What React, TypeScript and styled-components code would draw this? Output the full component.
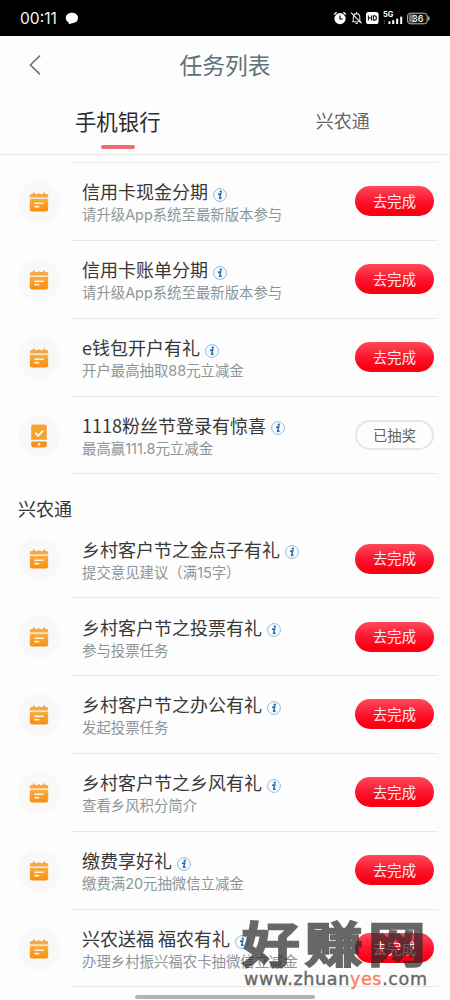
import React from "react";
import styled, { createGlobalStyle } from "styled-components";

type Task = {
  title: string;
  desc: string;
  icon?: "calendar" | "phone";
  done?: boolean;
};

const bankTasks: Task[] = [
  { title: "信用卡现金分期", desc: "请升级App系统至最新版本参与" },
  { title: "信用卡账单分期", desc: "请升级App系统至最新版本参与" },
  { title: "e钱包开户有礼", desc: "开户最高抽取88元立减金" },
  {
    title: "1118粉丝节登录有惊喜",
    desc: "最高赢111.8元立减金",
    icon: "phone",
    done: true,
  },
];

const farmTasks: Task[] = [
  { title: "乡村客户节之金点子有礼", desc: "提交意见建议（满15字）" },
  { title: "乡村客户节之投票有礼", desc: "参与投票任务" },
  { title: "乡村客户节之办公有礼", desc: "发起投票任务" },
  { title: "乡村客户节之乡风有礼", desc: "查看乡风积分简介" },
  { title: "缴费享好礼", desc: "缴费满20元抽微信立减金" },
  { title: "兴农送福 福农有礼", desc: "办理乡村振兴福农卡抽微信立减金" },
];

const CalendarIcon = () => (
  <svg width="20" height="22" viewBox="0 0 20 22">
    <defs>
      <linearGradient id="cal" x1="0" y1="0" x2="0" y2="1">
        <stop offset="0" stopColor="#f7ae48" />
        <stop offset="1" stopColor="#fb8c0c" />
      </linearGradient>
    </defs>
    <path
      d="M.8 6.6V4.8Q.8 3 2.6 3H3.6Q3.8 1.2 4.8 1.2T6 3H8.6Q9 2.2 10 2.2T11.4 3H14Q14.2 1.2 15.2 1.2T16.4 3H17.4Q19.2 3 19.2 4.8V6.6Z"
      fill="#f5a844"
    />
    <path d="M.8 7.8H19.2V18Q19.2 20.5 16.7 20.5H3.3Q.8 20.5 .8 18Z" fill="url(#cal)" />
    <path d="M5.4 12.2H14.6M5.4 15.6H10.2" stroke="#fff3de" strokeWidth="1.6" />
  </svg>
);

const PhoneIcon = () => (
  <svg width="18" height="24" viewBox="0 0 18 24">
    <path d="M1.2 15.8V3Q1.2.6 3.6.6H14.4Q16.8.6 16.8 3V15.8Z" fill="#f7a332" />
    <path d="M1.2 17.4H16.8V20.8Q16.8 23.4 14.2 23.4H3.8Q1.2 23.4 1.2 20.8Z" fill="#fa8d19" />
    <path d="M5.2 8.8L8.2 11.8L13 6.8" fill="none" stroke="#fff" strokeWidth="1.7" />
    <circle cx="9" cy="20.4" r="1.3" fill="#fff" />
  </svg>
);

const InfoIcon = () => (
  <svg width="14" height="14" viewBox="0 0 14 14">
    <circle cx="7" cy="7" r="6.4" fill="#fafdff" stroke="#7db2da" strokeWidth="0.9" />
    <circle cx="7.8" cy="3.6" r="1.2" fill="#1f6cb0" />
    <path
      d="M5 6.2L7.7 5.9L6.6 10.3Q6.8 10.7 8.6 9.8"
      fill="none"
      stroke="#1f6cb0"
      strokeWidth="1.5"
    />
  </svg>
);

const StatusIcons = () => (
  <svg width="100" height="16" viewBox="0 0 100 16">
    <circle cx="7" cy="8.6" r="5.6" fill="#fff" />
    <path d="M1.2 4.4L3.6 2.2M12.8 4.4L10.4 2.2" stroke="#fff" strokeWidth="1.4" />
    <path d="M7 5.4V9H9.8" fill="none" stroke="#000" strokeWidth="1.2" />
    <path
      d="M19 11.8H28M20.3 11.5V7.5Q20.3 3.8 23.5 3.6Q26.8 3.8 26.8 7.5V11.5M22.4 13.4H24.8M23.5 2V3.6"
      fill="none"
      stroke="#ddd"
      strokeWidth="1.1"
    />
    <path d="M18 2.6L28.6 13.4" stroke="#eee" strokeWidth="1.2" />
    <rect x="33" y="2" width="12.6" height="12" rx="2.6" fill="#fff" />
    <path
      d="M35.4 5.4V10.6M38.5 5.4V10.6M35.4 8H38.5M40.4 5.9V10.1H41.5Q43.4 10.1 43.4 8T41.5 5.9Z"
      fill="none"
      stroke="#111"
      strokeWidth="1.1"
    />
    <text x="50" y="7" fill="#fff" fontSize="7.4" fontWeight="700" fontFamily="Inter, sans-serif">
      5G
    </text>
    <g fill="#fff">
      <rect x="55.4" y="11.4" width="2" height="2.6" />
      <rect x="59.2" y="10.2" width="2" height="3.8" />
      <rect x="63.2" y="8.6" width="2" height="5.4" />
      <rect x="67.2" y="6.6" width="2" height="7.4" />
    </g>
    <rect x="50.8" y="10" width="1" height="4" fill="#444" />
    <rect x="74.6" y="3.2" width="19.6" height="10.6" rx="2.8" fill="#111" stroke="#bbb" />
    <rect x="76" y="4.6" width="6" height="7.8" rx="1.4" fill="#777" />
    <path d="M95.8 6.4V10.4" stroke="#ccc" strokeWidth="1.2" />
    <text x="79" y="11.7" fill="#fff" fontSize="9" fontWeight="500" fontFamily="Inter, sans-serif">
      36
    </text>
  </svg>
);

const TaskRow = ({ task }: { task: Task }) => (
  <Row>
    <IconHold>{task.icon === "phone" ? <PhoneIcon /> : <CalendarIcon />}</IconHold>
    <RowBody>
      <Info>
        <TitleLine>
          <Title>{task.title}</Title>
          <InfoIcon />
        </TitleLine>
        <Desc>{task.desc}</Desc>
      </Info>
      <Action $done={task.done}>{task.done ? "已抽奖" : "去完成"}</Action>
    </RowBody>
  </Row>
);

const App = () => {
  return (
    <Screen>
      <GlobalStyle />
      <StatusBar>
        <Clock>
          00:11
          <svg width="14" height="13" viewBox="0 0 14 13">
            <path
              d="M7 .8C10.6.8 13 3 13 6S10.6 11.2 7 11.2L3.8 12.2L3.6 10.4C1.6 9.4.8 7.8.8 6C.8 3 3.4.8 7 .8Z"
              fill="#fff"
            />
          </svg>
        </Clock>
        <StatusIcons />
      </StatusBar>
      <Header>
        <Back>
          <svg width="12" height="22" viewBox="0 0 12 22">
            <path d="M11 1.6L1.4 11L11 20.4" fill="none" stroke="#60757d" strokeWidth="1.5" />
          </svg>
        </Back>
        <HeaderTitle>任务列表</HeaderTitle>
      </Header>
      <Tabs>
        <Tab $active>手机银行</Tab>
        <Tab>兴农通</Tab>
      </Tabs>
      <Peek />
      {bankTasks.map((task) => (
        <TaskRow key={task.title} task={task} />
      ))}
      <Section>兴农通</Section>
      {farmTasks.map((task) => (
        <TaskRow key={task.title} task={task} />
      ))}
      <HomeBar />
      <Watermark>
        <MarkName>好赚网</MarkName>
        <MarkUrl>
          www.zhuan<span>yes</span>.com
        </MarkUrl>
      </Watermark>
    </Screen>
  );
};

export default App;

const GlobalStyle = createGlobalStyle`
  * {
    box-sizing: border-box;
  }

  body {
    margin: 0;
    background-color: #fdfdfd;
    font-family: "Noto Sans CJK SC", sans-serif;
  }
`;

const Screen = styled.div`
  position: relative;
  width: 450px;
  height: 1000px;
  overflow: hidden;
  background-color: #fdfdfd;
`;

const StatusBar = styled.div`
  display: flex;
  align-items: center;
  justify-content: space-between;
  height: 36px;
  padding: 0 17px 0 20px;
  background-color: #000;
`;

const Clock = styled.div`
  display: flex;
  align-items: center;
  gap: 8px;
  color: #f4f4f4;
  font-family: Inter, sans-serif;
  font-size: 15.6px;
`;

const Header = styled.div`
  display: grid;
  grid-template-columns: 60px 1fr 60px;
  align-items: center;
  height: 57px;
`;

const Back = styled.div`
  display: flex;
  padding-left: 29px;
`;

const HeaderTitle = styled.div`
  text-align: center;
  color: #5d717a;
  font-size: 22.8px;
  line-height: 29px;
`;

const Tabs = styled.div`
  display: grid;
  grid-template-columns: 1fr 1fr;
  height: 62px;
  padding: 0 0 5px 5px;
  border-bottom: 1px solid #e6e6e6;
`;

const Tab = styled.div<{ $active?: boolean }>`
  display: flex;
  flex-direction: column;
  align-items: center;
  padding: ${({ $active }) => ($active ? "0 0 0 3px" : "0 0 0 8px")};
  color: ${({ $active }) => ($active ? "#2c2c2c" : "#686868")};
  font-size: ${({ $active }) => ($active ? "21.4px" : "18px")};
  line-height: 55px;

  &::after {
    content: "";
    display: ${({ $active }) => ($active ? "block" : "none")};
    flex: none;
    width: 34px;
    height: 4px;
    margin-top: -3px;
    border-radius: 2px;
    background-color: #ee6a74;
  }
`;

const Peek = styled.div`
  height: 8px;
  margin: 0 12px 0 72px;
  border-bottom: 1px solid #ebebeb;
`;

const Row = styled.div`
  display: flex;
  height: 77.85px;
  padding: 0 12px 0 18px;
`;

const IconHold = styled.div`
  display: flex;
  align-items: center;
  justify-content: center;
  width: 42px;
  height: 42px;
  margin: 18px 12px 0 0;
  border-radius: 50%;
  background-color: #f8f8f8;
`;

const RowBody = styled.div`
  display: flex;
  flex: 1;
  align-items: center;
  justify-content: space-between;
  padding: 0 4px 0 10px;
  border-bottom: 1px solid #e8e8e8;
`;

const Info = styled.div`
  display: flex;
  flex-direction: column;
  padding-top: 4px;
  white-space: nowrap;
`;

const TitleLine = styled.div`
  display: flex;
  align-items: center;
  gap: 5px;
  height: 24px;

  svg {
    margin-top: 7px;
  }
`;

const Title = styled.div`
  color: #383838;
  font-size: 18px;
  line-height: 24px;
`;

const Desc = styled.div`
  color: #8c9699;
  font-family: Inter, "Noto Sans CJK SC", sans-serif;
  font-size: 14.4px;
  line-height: 24px;
`;

const Action = styled.div<{ $done?: boolean }>`
  display: flex;
  flex: none;
  align-items: center;
  justify-content: center;
  width: 79px;
  height: 30px;
  padding-bottom: ${({ $done }) => ($done ? "0" : "2px")};
  border: ${({ $done }) => ($done ? "2px solid #e6e6e6" : "none")};
  border-radius: 15px;
  background: ${({ $done }) =>
    $done ? "#fdfdfd" : "linear-gradient(#ff4a58, #fc1630 50%, #fb0012 85%)"};
  color: ${({ $done }) => ($done ? "#626262" : "#ffecec")};
  font-size: 14.3px;
`;

const Section = styled.div`
  height: 46px;
  padding: 11px 0 0 18px;
  color: #333;
  font-size: 18px;
  line-height: 46px;
`;

const HomeBar = styled.div`
  width: 180px;
  height: 4px;
  margin: 8px auto 0;
  border-radius: 2px;
  background-color: #b4b4b4;
`;

/* translucent site mark lying over the last row */
const Watermark = styled.div`
  position: absolute;
  left: 242px;
  top: 914px;
  width: 190px;
  color: #282828;
  opacity: 0.7;
  white-space: nowrap;
`;

const MarkName = styled.div`
  height: 57px;
  font-size: 48px;
  font-weight: 500;
  line-height: 55px;
  letter-spacing: 4.5px;
  transform: scaleX(1.2);
  transform-origin: left;
  stroke-linejoin: round;
  -webkit-text-stroke: 2.6px #282828;
`;

const MarkUrl = styled.div`
  margin-left: 2px;
  font-family: "DejaVu Sans", sans-serif;
  font-size: 17.5px;
  line-height: 16px;
  letter-spacing: 0.65px;
  -webkit-text-stroke: 0.4px #282828;

  span {
    color: #ff4a20;
    -webkit-text-stroke-color: #ff4a20;
  }
`;
